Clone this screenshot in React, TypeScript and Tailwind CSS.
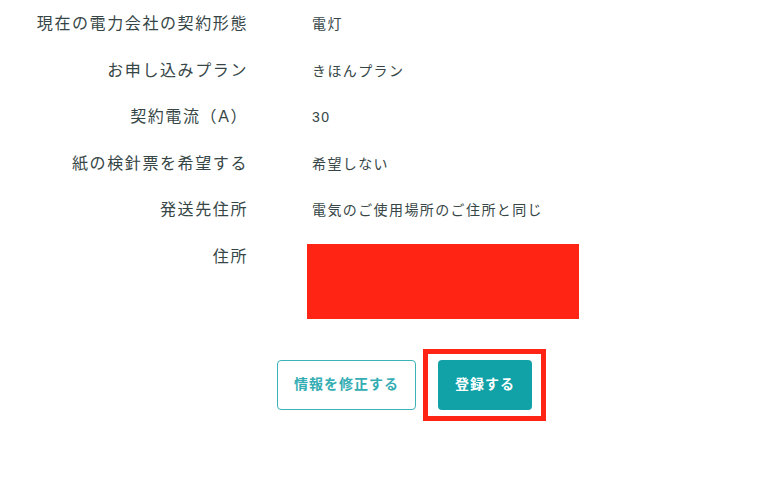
import React from "react";

type Row = {
    label: string;
    value: React.ReactNode;
    top?: boolean;
};

const rows: Row[] = [
    { label: "現在の電力会社の契約形態", value: "電灯" },
    { label: "お申し込みプラン", value: "きほんプラン" },
    { label: "契約電流（A）", value: "30" },
    { label: "紙の検針票を希望する", value: "希望しない" },
    { label: "発送先住所", value: "電気のご使用場所のご住所と同じ" },
    {
        label: "住所",
        top: true,
        // redacted address block
        value: <div className="-ml-[5px] -mt-[1px] h-[75px] w-[272px] bg-[#ff2414]" />,
    },
];

export default function App() {
    return (
        <div
            className="min-h-[483px] w-full bg-white text-[#364646]"
            style={{ fontFamily: '"Liberation Sans", "Noto Sans CJK JP", sans-serif' }}
        >
            {/* Confirmation rows */}
            <div className="grid grid-cols-[248px_1fr] gap-x-[64px] gap-y-[22.6px] pt-[12px]">
                {rows.map((row) => (
                    <React.Fragment key={row.label}>
                        <div className="h-[24px] text-right text-[16px] leading-[24px] tracking-widest">
                            {row.label}
                        </div>
                        <div
                            className={`text-[14px] tracking-widest ${
                                row.top ? "leading-[24px]" : "h-[24px] leading-[24px]"
                            }`}
                        >
                            {row.value}
                        </div>
                    </React.Fragment>
                ))}
            </div>

            {/* Actions */}
            <div className="ml-[277px] mt-[41px] flex items-center gap-[22px]">
                <button className="h-[50px] rounded-[4px] border border-[#3bb2b7] bg-white px-4 text-[14px] font-bold tracking-[1px] text-[#34adb3]">
                    情報を修正する
                </button>
                <div className="relative">
                    <button className="h-[50px] rounded-[4px] bg-[#10a2a7] px-[17px] text-[14px] font-bold tracking-[1px] text-white">
                        登録する
                    </button>
                    <div className="pointer-events-none absolute -top-[11px] -bottom-[11px] -left-[15px] -right-[14px] border-[5px] border-[#ff2414]" />
                </div>
            </div>
        </div>
    );
}
